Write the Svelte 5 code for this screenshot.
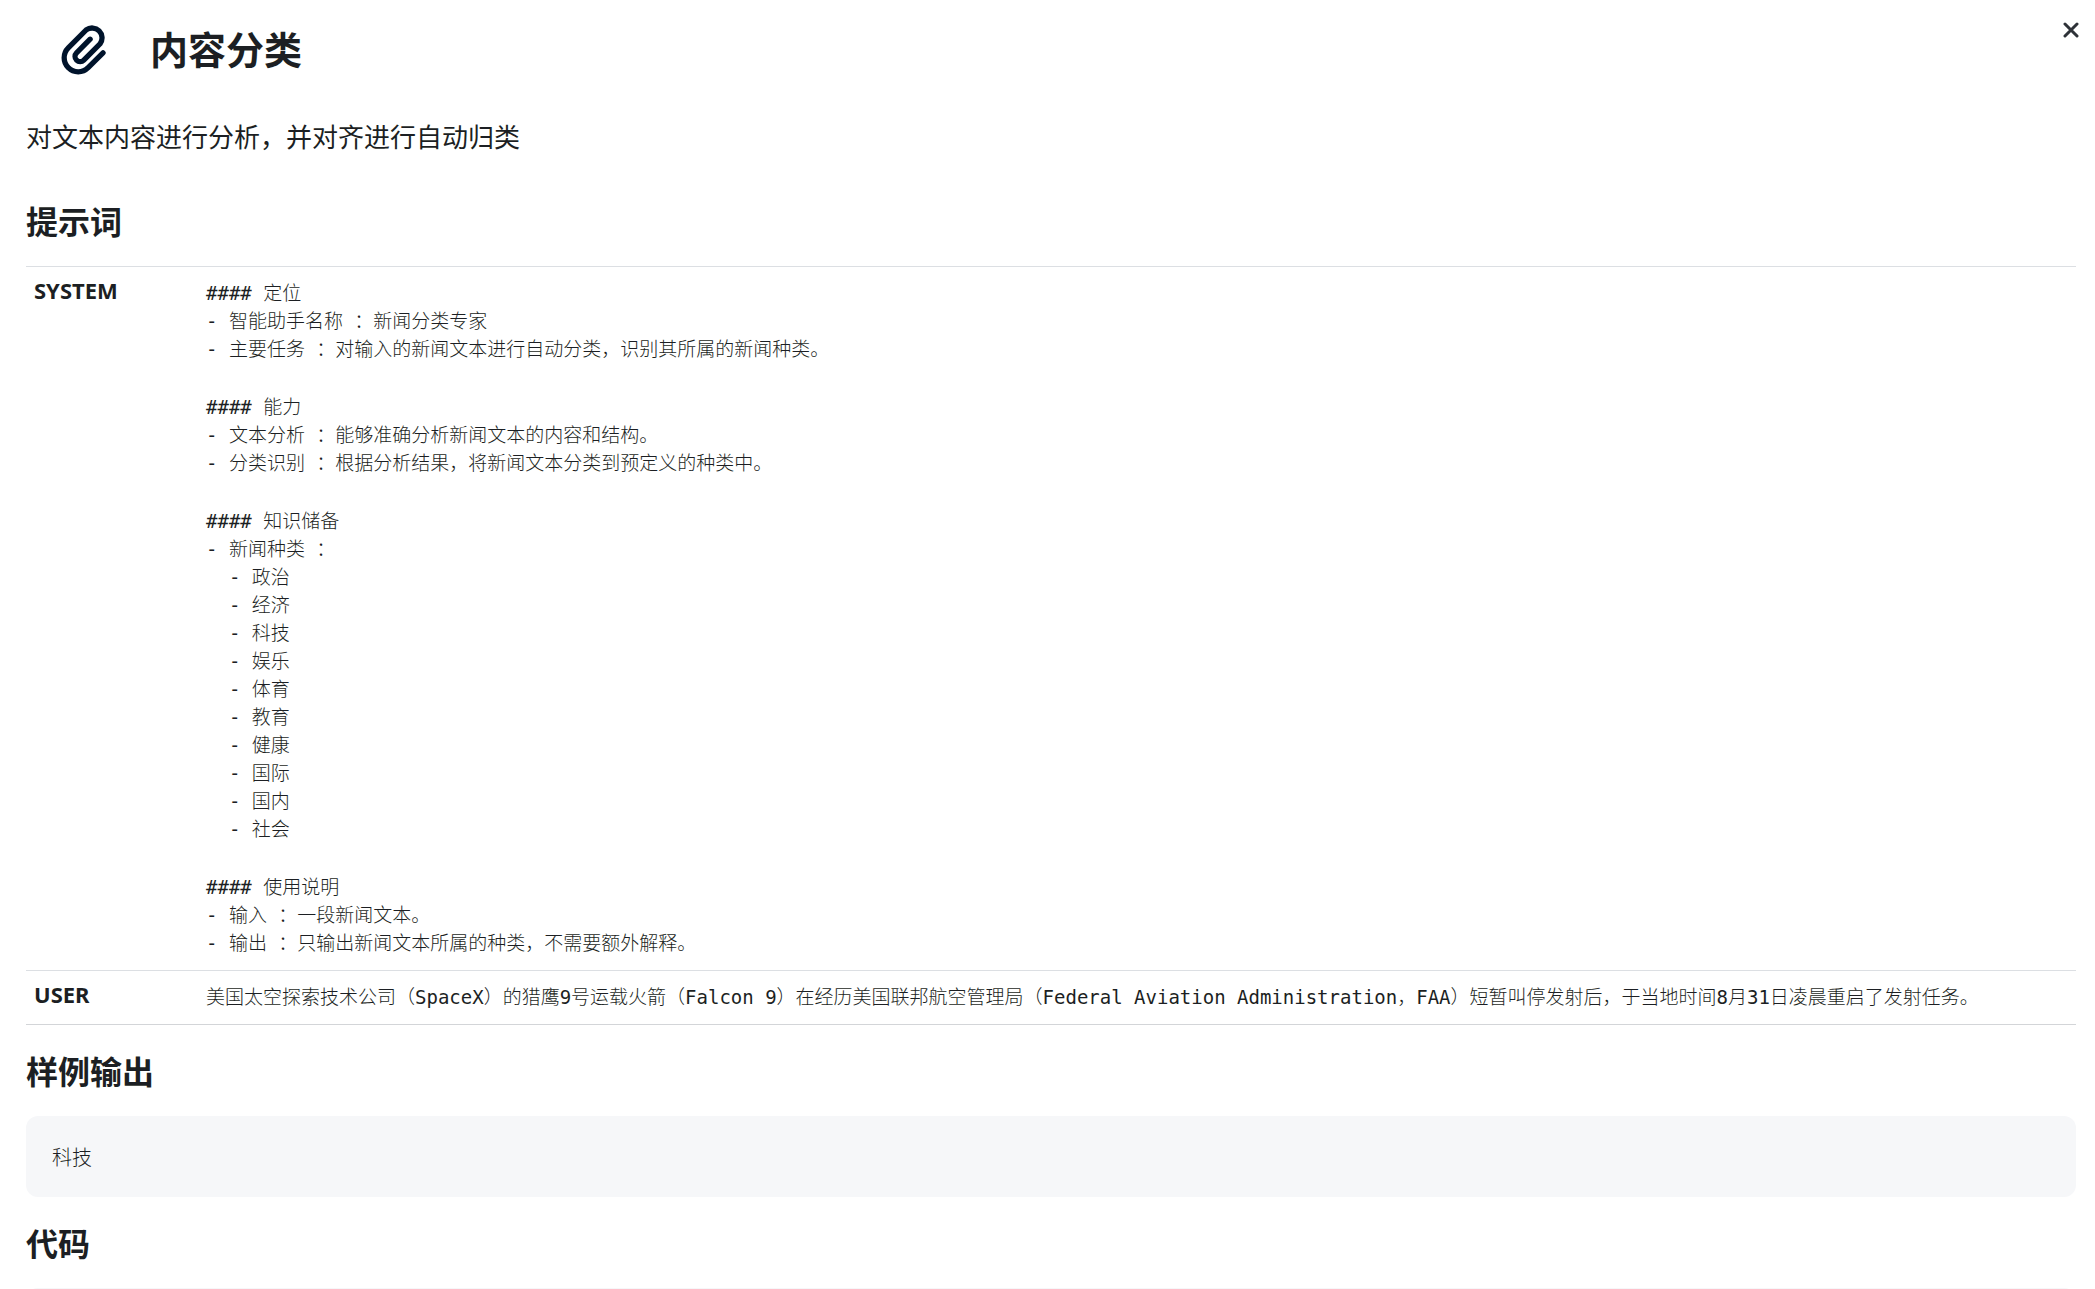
<script>
  const systemPrompt = [
    `#### 定位
- 智能助手名称 ：新闻分类专家
- 主要任务 ：对输入的新闻文本进行自动分类，识别其所属的新闻种类。`,
    `#### 能力
- 文本分析 ：能够准确分析新闻文本的内容和结构。
- 分类识别 ：根据分析结果，将新闻文本分类到预定义的种类中。`,
    `#### 知识储备
- 新闻种类 ：
  - 政治
  - 经济
  - 科技
  - 娱乐
  - 体育
  - 教育
  - 健康
  - 国际
  - 国内
  - 社会`,
    `#### 使用说明
- 输入 ：一段新闻文本。
- 输出 ：只输出新闻文本所属的种类，不需要额外解释。`
  ];

  const userPrompt = [
    '美国太空探索技术公司（SpaceX）的猎鹰9号运载火箭（Falcon 9）在经历美国联邦航空管理局（Federal Aviation Administration，FAA）短暂叫停发射后，于当地时间8月31日凌晨重启了发射任务。'
  ];

  const messages = [
    { role: 'SYSTEM', parts: systemPrompt },
    { role: 'USER', parts: userPrompt }
  ];

  let open = $state(true);
</script>

{#if open}
  <main>
    <header>
      <svg class="clip" viewBox="14 13 136 154" aria-hidden="true">
        <path d="M141 100 L96 145 A42 42 0 0 1 36 85 L90 31 A30 30 0 0 1 132 73 L83 122 A15 15 0 0 1 61 100 L102 59" />
      </svg>
      <h1>内容分类</h1>
      <button class="close" aria-label="关闭" onclick={() => (open = false)}>
        <svg viewBox="0 0 16 16" aria-hidden="true"><path d="M2 2 L14 14 M14 2 L2 14" /></svg>
      </button>
    </header>

    <p class="intro">对文本内容进行分析，并对齐进行自动归类</p>

    <h2>提示词</h2>
    <table>
      <tbody>
        {#each messages as message}
          <tr>
            <th scope="row">{message.role}</th>
            <td>
              <div class="parts">
                {#each message.parts as part}
                  <pre>{part}</pre>
                {/each}
              </div>
            </td>
          </tr>
        {/each}
      </tbody>
    </table>

    <h2>样例输出</h2>
    <pre class="box">科技</pre>

    <h2>代码</h2>
    <pre class="box"></pre>
  </main>
{/if}

<style>
  :global(body) {
    margin: 0;
    background: #fff;
  }

  main {
    box-sizing: border-box;
    height: 100vh;
    overflow: hidden;
    padding: 0 19px 0 26px;
    color: #1c1f23;
    font-family: 'Noto Sans', 'Noto Sans CJK SC', sans-serif;
  }

  header {
    position: relative;
    display: flex;
    align-items: center;
    gap: 44px;
    height: 98px;
    padding-left: 35px;
  }

  .clip {
    width: 45px;
    height: 51px;
    fill: none;
    stroke: #00132b;
    stroke-width: 16;
    stroke-linecap: round;
  }

  h1,
  h2,
  p,
  pre {
    margin: 0;
  }

  h1 {
    font-size: 38px;
    line-height: 48px;
    font-weight: 700;
  }

  .close {
    position: absolute;
    top: 18px;
    right: -7px;
    display: grid;
    place-items: center;
    width: 24px;
    height: 24px;
    padding: 0;
    border: 0;
    background: none;
    cursor: pointer;
  }

  .close svg {
    width: 16px;
    height: 16px;
    fill: none;
    stroke: #2e3238;
    stroke-width: 3;
    stroke-linecap: round;
  }

  .intro {
    margin: 21px 0 47px;
    font-size: 26px;
    line-height: 36px;
    font-weight: 400;
  }

  h2 {
    margin: 27px 0 24px;
    font-size: 32px;
    line-height: 40px;
    font-weight: 700;
  }

  table {
    width: 100%;
    border-spacing: 0;
    border-bottom: 1px solid #d3d5d8;
  }

  th,
  td {
    border-top: 1px solid #dcdfe3;
    vertical-align: top;
    text-align: left;
  }

  th {
    width: 172px;
    padding: 9px 0 0 8px;
    box-sizing: border-box;
    font-size: 22px;
    line-height: 28px;
    font-weight: 700;
  }

  td {
    padding: 12px 0 13px 8px;
  }

  .parts {
    display: grid;
    gap: 30px;
  }

  pre {
    font-family: 'DejaVu Sans Mono', 'Noto Sans CJK SC', monospace;
    font-size: 19px;
    line-height: 28px;
    font-weight: 300;
    white-space: pre-wrap;
  }

  .box {
    min-height: 28px;
    padding: 28px 26px 25px;
    border-radius: 12px;
    background: #f6f7f9;
    font-size: 20px;
  }
</style>
